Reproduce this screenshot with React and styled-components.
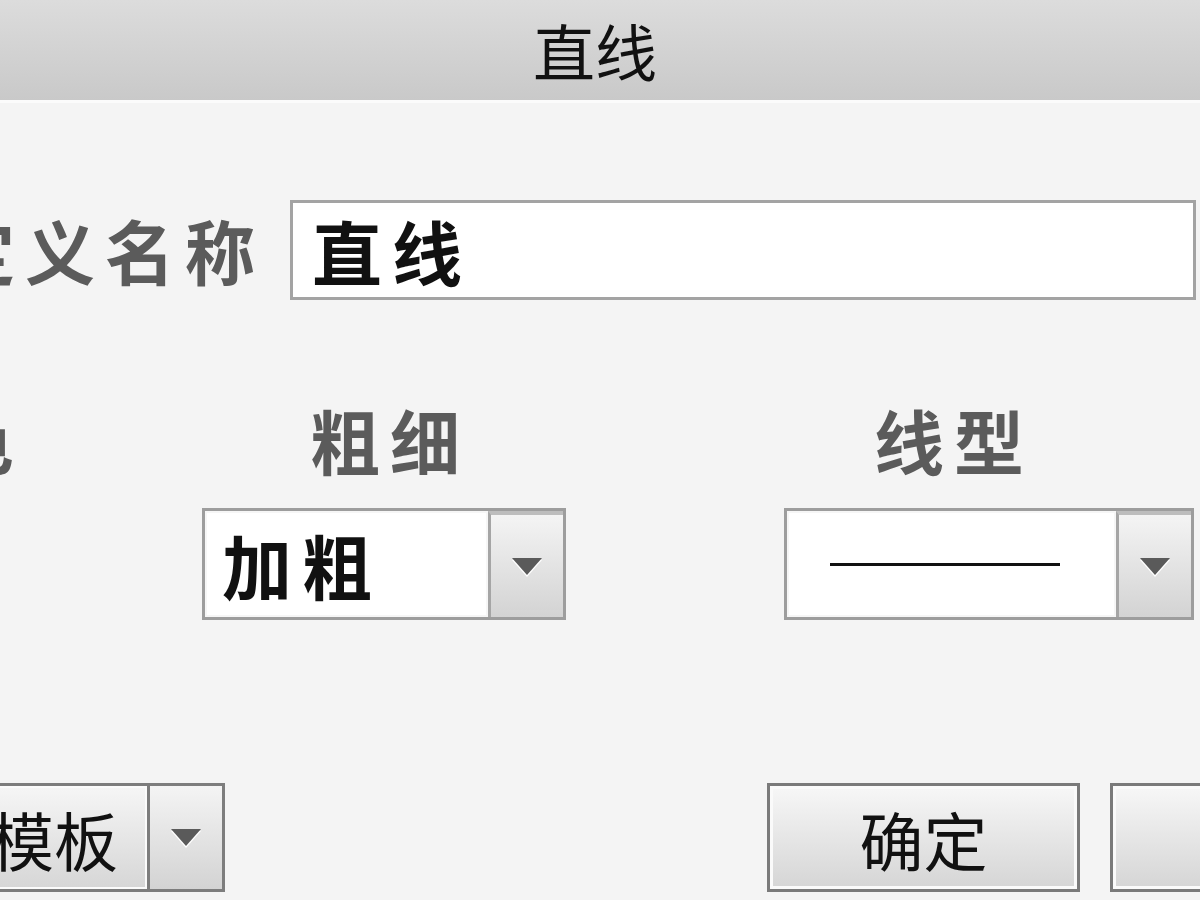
import React from 'react';
import styled, { createGlobalStyle } from 'styled-components';

const GlobalStyle = createGlobalStyle`
  html, body {
    margin: 0;
    padding: 0;
    background: #f4f4f4;
  }
`;

const Dialog = styled.div`
  width: 1200px;
  height: 900px;
  overflow: hidden;
  display: flex;
  flex-direction: column;
  background: #f4f4f4;
  font-family: "Noto Sans CJK SC", "Noto Sans", sans-serif;
`;

const TitleBar = styled.div`
  height: 100px;
  flex-shrink: 0;
  display: flex;
  align-items: center;
  justify-content: center;
  padding-right: 10px;
  background: linear-gradient(#dcdcdc, #c9c9c9);
  border-bottom: 3px solid #fbfbfb;
  font-size: 62px;
  line-height: 1;
  color: #111;
`;

const Body = styled.div`
  display: flex;
  flex-direction: column;
`;

const NameRow = styled.div`
  display: grid;
  grid-template-columns: 360px 1fr;
  align-items: center;
  margin: 97px 4px 0 -70px;
`;

const FieldLabel = styled.div`
  font-size: 70px;
  line-height: 80px;
  letter-spacing: 10px;
  font-weight: 700;
  color: #5b5b5b;
  white-space: nowrap;
  text-align: ${({ align }) => align || 'left'};
  padding-right: ${({ right }) => right || 0}px;
  padding-left: ${({ indent }) => indent || 0}px;
`;

const NameInput = styled.input`
  box-sizing: border-box;
  height: 100px;
  width: 100%;
  border: 3px solid #a3a3a3;
  background: #fff;
  padding: 0 0 0 19px;
  font-family: inherit;
  font-size: 70px;
  font-weight: 600;
  letter-spacing: 10px;
  color: #111;
  outline: none;
`;

const OptionsGrid = styled.div`
  display: grid;
  grid-template-columns: 360px 364px 410px;
  column-gap: 218px;
  margin: 100px 0 0 -376px;
`;

const OptionColumn = styled.div`
  display: flex;
  flex-direction: column;
  gap: 28px;
`;

const Select = styled.div`
  box-sizing: border-box;
  height: 112px;
  display: flex;
  border: 3px solid #9d9d9d;
  background: #fff;
`;

const SelectValue = styled.div`
  flex: 1;
  display: flex;
  align-items: center;
  padding-left: 15px;
  border: 2px solid #f6f6f6;
  font-size: 70px;
  font-weight: 600;
  letter-spacing: 10px;
  color: #111;
`;

const LineSample = styled.div`
  width: 230px;
  height: 3px;
  margin-left: 26px;
  background: #111;
`;

const ArrowButton = styled.div`
  width: ${({ width }) => width || 72}px;
  flex-shrink: 0;
  display: flex;
  align-items: center;
  justify-content: center;
  border-left: 3px solid ${({ dark }) => (dark ? '#7d7d7d' : '#a5a5a5')};
  border-top: ${({ dark }) => (dark ? 0 : '4px solid #bdbdbd')};
  background: linear-gradient(#f4f4f4, #d3d3d3);
`;

const Caret = styled.span`
  width: 0;
  height: 0;
  border-left: 15px solid transparent;
  border-right: 15px solid transparent;
  border-top: 17px solid #5a5a5a;
  filter: drop-shadow(0 2px 0 #fff);
`;

const ActionRow = styled.div`
  display: flex;
  gap: 30px;
  margin: 163px -223px 0 -170px;
`;

const SplitButton = styled.div`
  box-sizing: border-box;
  display: flex;
  width: 395px;
  height: 109px;
  margin-right: auto;
  border: 3px solid #7d7d7d;
  background: linear-gradient(#f6f6f6, #d6d6d6);
`;

const SplitLabel = styled.div`
  flex: 1;
  display: flex;
  align-items: center;
  justify-content: center;
  font-size: 64px;
  color: #111;
  box-shadow: inset 0 0 0 2px #fbfbfb;
`;

const Button = styled.div`
  box-sizing: border-box;
  width: 313px;
  height: 109px;
  display: flex;
  align-items: center;
  justify-content: center;
  border: 3px solid #7a7a7a;
  box-shadow: inset 0 0 0 3px #fafafa;
  background: linear-gradient(#f7f7f7, #d5d5d5);
  font-size: 64px;
  color: #111;
`;

export default function App() {
  return (
    <>
      <GlobalStyle />
      <Dialog>
        <TitleBar>直线</TitleBar>
        <Body>
          <NameRow>
            <FieldLabel align="right" right={25}>定义名称</FieldLabel>
            <NameInput readOnly value="直线" />
          </NameRow>

          <OptionsGrid>
            <OptionColumn>
              <FieldLabel indent={240}>颜色</FieldLabel>
              <Select>
                <SelectValue />
                <ArrowButton>
                  <Caret />
                </ArrowButton>
              </Select>
            </OptionColumn>
            <OptionColumn>
              <FieldLabel indent={108}>粗细</FieldLabel>
              <Select>
                <SelectValue>加粗</SelectValue>
                <ArrowButton>
                  <Caret />
                </ArrowButton>
              </Select>
            </OptionColumn>
            <OptionColumn>
              <FieldLabel indent={90}>线型</FieldLabel>
              <Select>
                <SelectValue>
                  <LineSample />
                </SelectValue>
                <ArrowButton>
                  <Caret />
                </ArrowButton>
              </Select>
            </OptionColumn>
          </OptionsGrid>

          <ActionRow>
            <SplitButton>
              <SplitLabel>选择模板</SplitLabel>
              <ArrowButton dark width={72}>
                <Caret />
              </ArrowButton>
            </SplitButton>
            <Button>确定</Button>
            <Button>取消</Button>
          </ActionRow>
        </Body>
      </Dialog>
    </>
  );
}
